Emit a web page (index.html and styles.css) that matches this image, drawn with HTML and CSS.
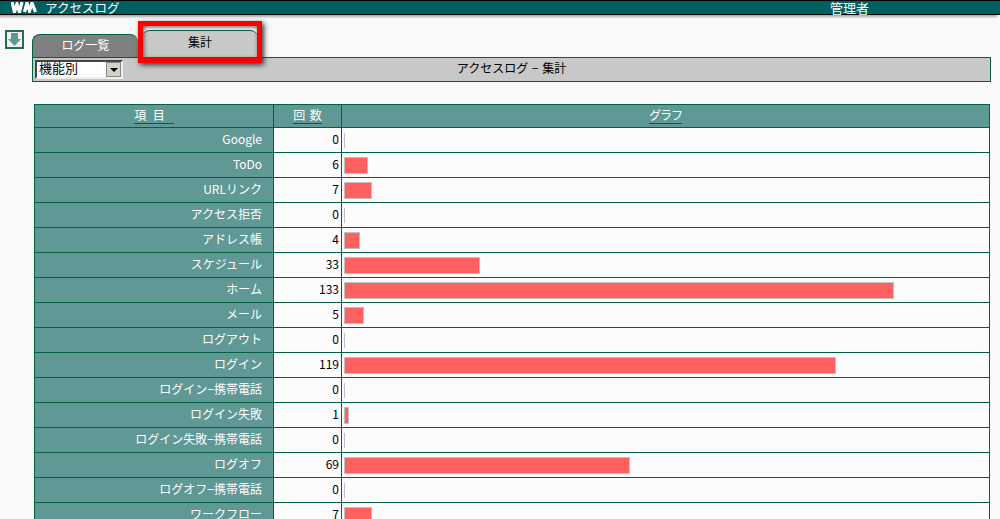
FILE: index.html
```html
<!DOCTYPE html>
<html lang="ja">
<head>
  <meta charset="UTF-8">
  <title>アクセスログ</title>
  <link rel="stylesheet" href="styles.css">
</head>
<body>
  <div class="topbar">
    <svg class="logo" width="26" height="11" viewBox="0 0 26 11"><path d="M1 0l2.500 10L6 2l2.500 8L11 0M13.500 10L16 1l2.500 8L21 1l3.500 9" fill="none" stroke="#fff" stroke-width="3.200"/></svg>
    <span class="topbar-title">アクセスログ</span>
    <span class="topbar-user">管理者</span>
  </div>

  <div class="main">
    <a class="down-btn">
      <svg width="15" height="15" viewBox="0 0 15 15"><path d="M4 1h7v6h3l-6.500 7L1 7h3z" fill="#5f9895"/></svg>
    </a>
    <div class="content">
      <div class="tabs">
        <div class="tab tab-off">ログ一覧</div>
        <div class="tab tab-on">集計</div>
      </div>
      <div class="titlebar">
        <div class="fake-select">
          <span class="fake-select-text">機能別</span>
          <span class="fake-select-btn"></span>
        </div>
        <div class="titlebar-text">アクセスログ − 集計</div>
      </div>

      <table class="log-table">
        <thead>
          <tr>
            <th class="col-name"><span class="head-name">項 目</span></th>
            <th class="col-count"><span class="head-count">回 数</span></th>
            <th><span class="head-graph">グラフ</span></th>
          </tr>
        </thead>
        <tbody>
          <tr><td class="name">Google</td><td class="count">0</td><td class="graph"><div class="bar zero"></div></td></tr>
          <tr><td class="name">ToDo</td><td class="count">6</td><td class="graph"><div class="bar" style="width:22px"></div></td></tr>
          <tr><td class="name">URLリンク</td><td class="count">7</td><td class="graph"><div class="bar" style="width:26px"></div></td></tr>
          <tr><td class="name">アクセス拒否</td><td class="count">0</td><td class="graph"><div class="bar zero"></div></td></tr>
          <tr><td class="name">アドレス帳</td><td class="count">4</td><td class="graph"><div class="bar" style="width:14px"></div></td></tr>
          <tr><td class="name">スケジュール</td><td class="count">33</td><td class="graph"><div class="bar" style="width:134px"></div></td></tr>
          <tr><td class="name">ホーム</td><td class="count">133</td><td class="graph"><div class="bar" style="width:548px"></div></td></tr>
          <tr><td class="name">メール</td><td class="count">5</td><td class="graph"><div class="bar" style="width:18px"></div></td></tr>
          <tr><td class="name">ログアウト</td><td class="count">0</td><td class="graph"><div class="bar zero"></div></td></tr>
          <tr><td class="name">ログイン</td><td class="count">119</td><td class="graph"><div class="bar" style="width:490px"></div></td></tr>
          <tr><td class="name">ログイン−携帯電話</td><td class="count">0</td><td class="graph"><div class="bar zero"></div></td></tr>
          <tr><td class="name">ログイン失敗</td><td class="count">1</td><td class="graph"><div class="bar" style="width:3px"></div></td></tr>
          <tr><td class="name">ログイン失敗−携帯電話</td><td class="count">0</td><td class="graph"><div class="bar zero"></div></td></tr>
          <tr><td class="name">ログオフ</td><td class="count">69</td><td class="graph"><div class="bar" style="width:284px"></div></td></tr>
          <tr><td class="name">ログオフ−携帯電話</td><td class="count">0</td><td class="graph"><div class="bar zero"></div></td></tr>
          <tr><td class="name">ワークフロー</td><td class="count">7</td><td class="graph"><div class="bar" style="width:26px"></div></td></tr>
        </tbody>
      </table>
    </div>
  </div>
</body>
</html>
```

FILE: styles.css
```css
html, body {
  height: 519px;
  overflow: hidden;
}
body {
  margin: 0;
  background: #f9f9f9;
  color: #000;
  font-family: "Noto Sans CJK JP", "Liberation Sans", sans-serif;
  font-size: 12px;
}

/* top bar */
.topbar {
  display: flex;
  align-items: center;
  height: 13px;
  background: #006060;
  border-top: 1px solid #000;
  border-bottom: 1px solid #000;
  box-shadow: -3px 2px 2px #aaa;
  color: #fff;
  padding-left: 11px;
  line-height: 13px;
}
.logo {
  margin-right: 8px;
}
.topbar-title {
  font-size: 12.5px;
}
.topbar-user {
  margin-left: auto;
  margin-right: 131px;
  font-size: 13px;
}

/* main */
.main {
  display: flex;
  padding: 15px 8px 0 5px;
}
.down-btn {
  display: flex;
  align-items: center;
  justify-content: center;
  width: 15px;
  height: 15px;
  margin-right: 8px;
  background: #f0f0f0;
  border: 2px solid #207050;
}
.content {
  width: 959px;
}

/* tabs */
.tabs {
  display: flex;
  align-items: flex-end;
  height: 27px;
}
.tab {
  text-align: center;
  border-radius: 8px 8px 0 0;
}
.tab-off {
  width: 106px;
  height: 23px;
  line-height: 19px;
  background: #808080;
  border-top: 1px solid #006040;
  border-left: 1px solid #006040;
  box-sizing: border-box;
  color: #fff;
}
.tab-on {
  position: relative;
  z-index: 1;
  width: 116px;
  height: 27px;
  line-height: 22px;
  margin-left: 4px;
  background: #c8c8c8;
  border-top: 1px solid #006040;
  box-sizing: border-box;
}
/* red highlight drawn over the screenshot */
.tab-on::after {
  content: "";
  position: absolute;
  left: -4px;
  top: -10px;
  width: 114px;
  height: 32px;
  border: 5px solid #f00;
  box-shadow: 2px 2px 5px #333, inset 1px 1px 4px #555;
}

.titlebar {
  position: relative;
  display: flex;
  align-items: center;
  height: 23px;
  background: #c8c8c8;
  border: 1px solid #006040;
}
.fake-select {
  position: relative;
  z-index: 1;
  display: flex;
  width: 84px;
  height: 15px;
  margin-left: 2px;
  background: #fff;
  border: 2px solid #444;
  border-right-color: #eee;
  border-bottom-color: #eee;
}
.fake-select-text {
  flex: 1;
  padding-left: 2px;
  line-height: 11px;
  font-size: 13px;
}
.fake-select-btn {
  position: relative;
  width: 15px;
  background: #d4d0c8;
  border: 1px solid #888;
  box-sizing: border-box;
}
.fake-select-btn::after {
  content: "";
  position: absolute;
  left: 3px;
  top: 5px;
  border: 4px solid transparent;
  border-top: 4px solid #000;
  border-bottom: 0;
}
.titlebar-text {
  position: absolute;
  left: 0;
  right: 0;
  top: 0;
  line-height: 19px;
  text-align: center;
  word-spacing: 1px;
}

/* table */
.log-table {
  width: 956px;
  margin: 22px 0 0 2px;
  border-collapse: collapse;
  table-layout: fixed;
  background: #fff;
}
.log-table th,
.log-table td {
  height: 24px;
  padding: 0;
  border: 1px solid #006040;
  font-weight: normal;
}
.log-table th {
  height: 19px;
  padding-bottom: 3px;
  background: #5f9895;
  color: #fff;
}
.log-table th span {
  border-bottom: 1px solid #006040;
}
.log-table th .head-name {
  padding-right: 9px;
  word-spacing: 4px;
}
.log-table th .head-count {
  word-spacing: 2px;
}
.log-table th .head-graph {
  letter-spacing: -1px;
}
.col-name {
  width: 238px;
}
.col-count {
  width: 67px;
}
.log-table td.name {
  height: 20px;
  padding: 0 11px 4px 0;
  background: #5f9895;
  color: #fff;
  text-align: right;
}
.log-table td.count {
  height: 20px;
  padding: 0 2px 4px 0;
  background: #fcfcfc;
  text-align: right;
}
.log-table td.graph {
  padding-left: 2px;
  background: #fcfcfc;
}
.bar {
  height: 15px;
  background: #ff6060;
  border: 1px solid #c0c0c0;
}
.bar.zero {
  width: 0;
  background: none;
  border-width: 0 0 0 1px;
}
```
